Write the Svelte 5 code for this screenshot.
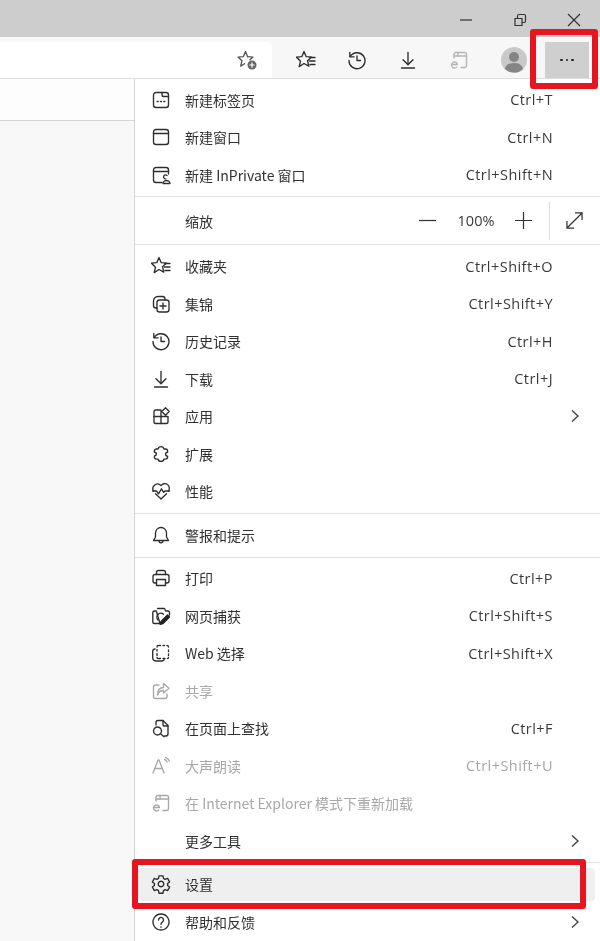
<script>
  const star = 'M8 1.500l2.200 5.200 5.400.4-4.100 3.600 1.300 5.400L8 13.500l-4.800 3.100 1.300-5.400L.4 7.100 5.800 6.700z';
  const icons = {
    newtab: ['M5 2.500h10A2.500 2.500 0 0 1 17.500 5v10a2.500 2.500 0 0 1-2.500 2.500H5A2.500 2.500 0 0 1 2.500 15V5A2.500 2.500 0 0 1 5 2.500z', 'M11 2.500V5a1.500 1.500 0 0 0 1.500 1.500h5', 'M6.200 11.500h1M9.500 11.500h1M12.800 11.500h1'],
    window: ['M5 2.500h10A2.500 2.500 0 0 1 17.500 5v10a2.500 2.500 0 0 1-2.500 2.500H5A2.500 2.500 0 0 1 2.500 15V5A2.500 2.500 0 0 1 5 2.500z', 'M2.500 6.500h15'],
    inprivate: ['M11 17.500H5A2.500 2.500 0 0 1 2.500 15V5A2.500 2.500 0 0 1 5 2.500h10A2.500 2.500 0 0 1 17.500 5v4', 'M2.500 6.500h15', 'M16 10.500a2 2 0 1 0-1.200 3.400M12 18.500c0-2 2-3 3.500-3s3.500 1 3.500 3z'],
    favorites: [star, 'M14 7.500h5M13.500 11H19M14 14.500h5'],
    addfav: ['M10.600 6.700L8.500 1.500 6.300 6.700 1 7.100 5 10.700 3.700 16.100 7.500 13.700', 'M10.600 6.700L16 7.100 13 9.800'],
    collections: ['M14 6V5a2.500 2.500 0 0 0-2.500-2.500H7A4.500 4.500 0 0 0 2.500 7v4.500A2.500 2.500 0 0 0 5 14h1', 'M8.500 6h7A2.500 2.500 0 0 1 18 8.500v7a2.500 2.500 0 0 1-2.500 2.500h-7A2.500 2.500 0 0 1 6 15.500v-7A2.500 2.500 0 0 1 8.500 6z', 'M12 9v6M9 12h6'],
    history: ['M3.200 6.500A8 8 0 1 1 2 10.500', 'M2.800 2.500v4.300h4.300', 'M10 6v4.500h3.500'],
    download: ['M10 2.500v12', 'M5 9.700l5 5 5-5', 'M3.500 18h13'],
    apps: ['M3 10.500V5.500a1.500 1.500 0 0 1 1.500-1.500H10v13.500', 'M3 10.500h14v5.500a1.500 1.500 0 0 1-1.500 1.500h-11A1.500 1.500 0 0 1 3 16z', 'M14.500 1.800l3.700 3.700-3.700 3.700-3.700-3.700z'],
    extension: ['M10 2.600c1.700 0 2.700 1.200 2.900 2.400h1.700a2 2 0 0 1 2 2v1.200c-2.600 0-2.600 4 0 4v.9a2 2 0 0 1-2 2h-1.700c-.4 3-5.400 3-5.800 0H5.400a2 2 0 0 1-2-2v-1.300c2.600 0 2.600-3.600 0-3.600V7a2 2 0 0 1 2-2h1.700c.2-1.200 1.200-2.400 2.900-2.400z'],
    performance: ['M10 18l-5.500-5.300M15.500 12.700L10 18', 'M2.600 10A4.600 4.600 0 0 1 10 4.600 4.600 4.600 0 0 1 17.500 10', 'M1.500 10h4l2 2.800 3-5 2.200 3.600 1.300-1.400h4.500'],
    bell: ['M10 2.500a5.500 5.500 0 0 1 5.500 5.500v4l2 3.500h-15l2-3.500V8A5.500 5.500 0 0 1 10 2.500z', 'M8 15.800a2 2 0 0 0 4 0'],
    print: ['M5.500 6.500V4.500a2 2 0 0 1 2-2h5a2 2 0 0 1 2 2v2', 'M5.500 15H4a2 2 0 0 1-2-2V8.500a2 2 0 0 1 2-2h12a2 2 0 0 1 2 2V13a2 2 0 0 1-2 2h-1.500', 'M5.500 11.500h9V17.500h-9z'],
    capture: ['M6.500 2.500h7l1.200 2.500H17a1.500 1.500 0 0 1 1.500 1.500v2.500', 'M9 17.500H3.300A1.500 1.500 0 0 1 1.800 16V6.500A1.500 1.500 0 0 1 3.300 5h2z', 'M7 14a4 4 0 0 1 5.500-5.800'],
    select: ['M8 2.500h1.500M12 2.500h1.500M16 2.500a1.500 1.500 0 0 1 1.500 1.500M17.500 7v1.500M17.500 11v1.500M17.500 14.500a1 1 0 0 1-1 1M8 15.500h1.500M12 15.500h2M6 4a1.500 1.500 0 0 1 1-1.500M6 6.500v1.500M6 10.500v2M6 14.500a1 1 0 0 0 1 1', 'M4 6a2.500 2.500 0 0 0-2.300 2.500v6A3.500 3.500 0 0 0 5 18h6a2.500 2.500 0 0 0 2.200-1.500'],
    share: ['M8 4H4.500A2 2 0 0 0 2.500 6v9.500a2 2 0 0 0 2 2H14a2 2 0 0 0 2-2V13', 'M12.500 2.500L18 7.300l-5.500 4.700V9.500C9 9.500 7.500 11 6.500 14c0-4.500 2-7.500 6-7.500z'],
    find: ['M5 7V4.500a2 2 0 0 1 2-2h5l5 5v8.500a2 2 0 0 1-2 2h-1.500', 'M12 2.500V7a1 1 0 0 0 1 1h4', 'M6.500 9a4 4 0 1 0 .01 0z', 'M9.500 15.800l3.500 3'],
    read: ['M2 17L7 4h1l5 13', 'M4 12.500h7', 'M13.500 3.500a4 4 0 0 1 2.500 2.500M14.500 1.300a6.500 6.500 0 0 1 3.800 3.800'],
    ie: ['M5 8V4.500a2 2 0 0 1 2-2h8.500a2 2 0 0 1 2 2v11a2 2 0 0 1-2 2H12', 'M5 6h12.500', 'M2.500 14.500h6a3 3 0 1 0-.8 2.600', 'M9 2.500v3.500'],
    gear: ['M8 1.800h4l.5 2.600 1.600.9 2.500-.9 2 3.500-2 1.700v1.800l2 1.700-2 3.500-2.500-.9-1.600.9-.5 2.600H8l-.5-2.600-1.600-.9-2.500.9-2-3.500 2-1.700V9.600l-2-1.700 2-3.500 2.500.9 1.600-.9z', 'M10 7.200a2.800 2.800 0 1 0 .01 0z'],
    help: ['M10 2a8 8 0 1 0 .01 0z', 'M7.500 8a2.500 2.500 0 1 1 3.800 2.100c-.9.6-1.300 1-1.300 2.100', 'M10 14.800v.5']
  };

  const sections = [
    { cls: 's1', rows: [
      { icon: 'newtab', label: '新建标签页', key: 'Ctrl+T' },
      { icon: 'window', label: '新建窗口', key: 'Ctrl+N' },
      { icon: 'inprivate', label: '新建 InPrivate 窗口', key: 'Ctrl+Shift+N' }
    ]},
    { cls: 'zoom', rows: [] },
    { cls: 's3', rows: [
      { icon: 'favorites', label: '收藏夹', key: 'Ctrl+Shift+O' },
      { icon: 'collections', label: '集锦', key: 'Ctrl+Shift+Y' },
      { icon: 'history', label: '历史记录', key: 'Ctrl+H' },
      { icon: 'download', label: '下载', key: 'Ctrl+J' },
      { icon: 'apps', label: '应用', more: true },
      { icon: 'extension', label: '扩展' },
      { icon: 'performance', label: '性能' }
    ]},
    { cls: 's4', rows: [{ icon: 'bell', label: '警报和提示' }] },
    { cls: 's5', rows: [
      { icon: 'print', label: '打印', key: 'Ctrl+P' },
      { icon: 'capture', label: '网页捕获', key: 'Ctrl+Shift+S' },
      { icon: 'select', label: 'Web 选择', key: 'Ctrl+Shift+X' },
      { icon: 'share', label: '共享', off: true },
      { icon: 'find', label: '在页面上查找', key: 'Ctrl+F' },
      { icon: 'read', label: '大声朗读', key: 'Ctrl+Shift+U', off: true },
      { icon: 'ie', label: '在 Internet Explorer 模式下重新加载', off: true },
      { label: '更多工具', more: true }
    ]},
    { cls: 's6', rows: [
      { icon: 'gear', label: '设置', hover: true },
      { icon: 'help', label: '帮助和反馈', more: true }
    ]}
  ];
</script>

{#snippet icon(name, cls = 'ic')}
  <svg class={cls} viewBox="0 0 20 20" aria-hidden="true">
    {#each icons[name] as d}<path {d} />{/each}
    {#if name === 'capture'}<path class="pen" d="M10 15.500l6.500-6.500 2 2-6.500 6.500-2.800.8z" />{/if}
    {#if name === 'addfav'}
      <circle class="badge" cx="15" cy="15" r="4.500" />
      <path class="badge-plus" d="M15 12.800v4.400M12.800 15h4.400" />
    {/if}
  </svg>
{/snippet}

<div class="page">
  <header class="title">
    <svg class="wc" viewBox="0 0 14 14"><path d="M1 7h12" /></svg>
    <svg class="wc" viewBox="0 0 14 14"><path d="M2 5.500h7v7H2zM4.500 5.500V3a1.500 1.500 0 0 1 1.500-1.500h5A1.500 1.500 0 0 1 12.500 3v5A1.500 1.500 0 0 1 11 9.500H9" /></svg>
    <svg class="wc" viewBox="0 0 14 14"><path d="M1 1l12 12M13 1L1 13" /></svg>
  </header>

  <div class="toolbar">
    <div class="address">{@render icon('addfav', 'ic addfav')}</div>
    <div class="tools">
      {@render icon('favorites')}
      {@render icon('history')}
      {@render icon('download')}
      {@render icon('ie', 'ic faded')}
      <svg class="avatar" viewBox="0 0 26 26">
        <circle class="face" cx="13" cy="13" r="13" />
        <circle class="head" cx="13" cy="10" r="5" />
        <path class="head" d="M4 22c1-5 5-6 9-6s8 1 9 6a13 13 0 0 1-18 0z" />
      </svg>
      <div class="more-btn"><span></span><span></span><span></span></div>
    </div>
  </div>

  <div class="body">
    <aside class="side">
      <div class="side-top"></div>
    </aside>
    <nav class="menu">
      {#each sections as s}
        <section class={s.cls}>
          {#if s.cls === 'zoom'}
            <div class="zoom-row">
              <span class="label">缩放</span>
              <svg class="zi minus" viewBox="0 0 18 18"><path d="M0 9h18" /></svg>
              <span class="pct">100%</span>
              <svg class="zi" viewBox="0 0 18 18"><path d="M0 9h18M9 0v18" /></svg>
              <span class="vline"></span>
              <svg class="zi" viewBox="0 0 18 18"><path d="M1 17L17 1M9.500 1H17v7.500M1 9.500V17h7.500" /></svg>
            </div>
          {:else}
            {#each s.rows as r}
              <div class="row" class:off={r.off} class:hover={r.hover}>
                <span class="slot">{#if r.icon}{@render icon(r.icon)}{/if}</span>
                <span class="label">{r.label}</span>
                {#if r.key}<span class="key">{r.key}</span>{/if}
                <span class="end">
                  {#if r.more}<svg class="chev" viewBox="0 0 10 14"><path d="M2 1.500L8 7l-6 5.500" /></svg>{/if}
                </span>
              </div>
            {/each}
          {/if}
        </section>
      {/each}
    </nav>
  </div>

  <div class="mark mark-top"></div>
  <div class="mark mark-settings"></div>
</div>

<style>
  :global(body) { margin: 0; background: #fff; }
  .page {
    position: relative;
    width: 600px;
    height: 941px;
    overflow: hidden;
    font-family: "Noto Sans CJK SC", "Noto Sans", sans-serif;
    font-size: 14px;
    color: #303030;
    background: #fff;
    filter: blur(0.35px);
  }
  .title {
    height: 37px;
    background: #cdcdcd;
    display: flex;
    justify-content: flex-end;
    align-items: center;
    gap: 40px;
    padding: 2px 19px 0 0;
    box-sizing: border-box;
  }
  .wc { width: 14px; height: 14px; fill: none; stroke: #333; stroke-width: 1.200; }
  .toolbar {
    height: 41px;
    background: #f7f7f7;
    display: flex;
    box-sizing: border-box;
    padding-top: 5px;
  }
  .address {
    width: 272px;
    background: #fff;
    border-radius: 0 4px 0 0;
    display: flex;
    align-items: center;
    justify-content: flex-end;
    padding-right: 15px;
    box-sizing: border-box;
  }
  .tools {
    flex: 1;
    display: flex;
    align-items: center;
    padding-left: 24px;
    gap: 31px;
  }
  .ic { width: 20px; height: 20px; flex: none; fill: none; stroke: #2e2e2e; stroke-width: 1.350; stroke-linecap: round; stroke-linejoin: round; }
  .addfav { stroke: #555; }
  .badge { fill: #666; stroke: none; }
  .badge-plus { stroke: #fff; stroke-width: 1.200; }
  .faded { stroke: #b5b5b5; }
  .pen { fill: #222; stroke: #222; }
  .avatar { width: 26px; height: 26px; flex: none; margin-left: 1px; }
  .face { fill: #c9c9c9; }
  .head { fill: #858585; }
  .more-btn {
    width: 44px;
    height: 36px;
    margin-left: -13px;
    background: #cfcfcf;
    display: flex;
    align-items: center;
    justify-content: center;
    gap: 3px;
  }
  .more-btn span { width: 2.500px; height: 2.500px; border-radius: 50%; background: #222; }

  .body { display: flex; height: 863px; border-top: 1px solid #dedede; }
  .side { width: 135px; flex: none; background: #f8f8f8; border-right: 1px solid #d4d4d4; box-sizing: border-box; }
  .side-top { height: 41px; background: #fdfdfd; border-bottom: 1px solid #d6d6d6; }
  .menu { flex: 1; background: #fff; }
  section { border-bottom: 1px solid #e2e2e2; box-sizing: border-box; }
  section:last-child { border-bottom: 0; }
  .s1 { height: 118px; padding-top: 2px; }
  .zoom { height: 48px; }
  .s3 { height: 269px; padding-top: 2.250px; }
  .s4 { height: 44px; padding-top: 2px; }
  .s5 { height: 305px; padding-top: 1.250px; }
  .s6 { padding-top: 2.250px; }

  .row {
    height: 37.500px;
    display: flex;
    align-items: center;
    padding: 0 20px 0 16px;
    box-sizing: border-box;
  }
  .row.hover {
    height: 33px;
    margin: 2.250px 5px 2.250px 3px;
    padding: 0 15px 0 13px;
    background: #efefef;
    border-radius: 4px;
  }
  .slot { width: 34px; flex: none; display: flex; }
  .label { flex: 1; white-space: nowrap; line-height: 20px; }
  .key { font-family: "Open Sans", "Noto Sans", sans-serif; font-size: 14.500px; letter-spacing: 0.45px; white-space: nowrap; color: #3a3a3a; }
  .end { width: 27px; flex: none; display: flex; justify-content: flex-end; }
  .chev { width: 10px; height: 14px; fill: none; stroke: #444; stroke-width: 1.400; }
  .off, .off .key { color: #a8a8a8; }
  .off .ic { stroke: #a8a8a8; }

  .zoom-row {
    height: 100%;
    display: flex;
    align-items: center;
    padding: 0 17px 0 50px;
  }
  .zi { width: 17px; height: 17px; flex: none; fill: none; stroke: #333; stroke-width: 1.300; }
  .pct { width: 40px; margin: 0 19px 0 20px; font-family: "Open Sans", "Noto Sans", sans-serif; font-size: 14.500px; text-align: center; color: #3a3a3a; }
  .vline { width: 1px; height: 38px; margin: 0 16px 0 17px; background: #dcdcdc; }

  .mark { position: absolute; box-sizing: border-box; border: 6.500px solid #e5161f; border-radius: 3px; }
  .mark-top { left: 530px; top: 29px; width: 68px; height: 60px; }
  .mark-settings { left: 132px; top: 859px; width: 454px; height: 50px; }
</style>
